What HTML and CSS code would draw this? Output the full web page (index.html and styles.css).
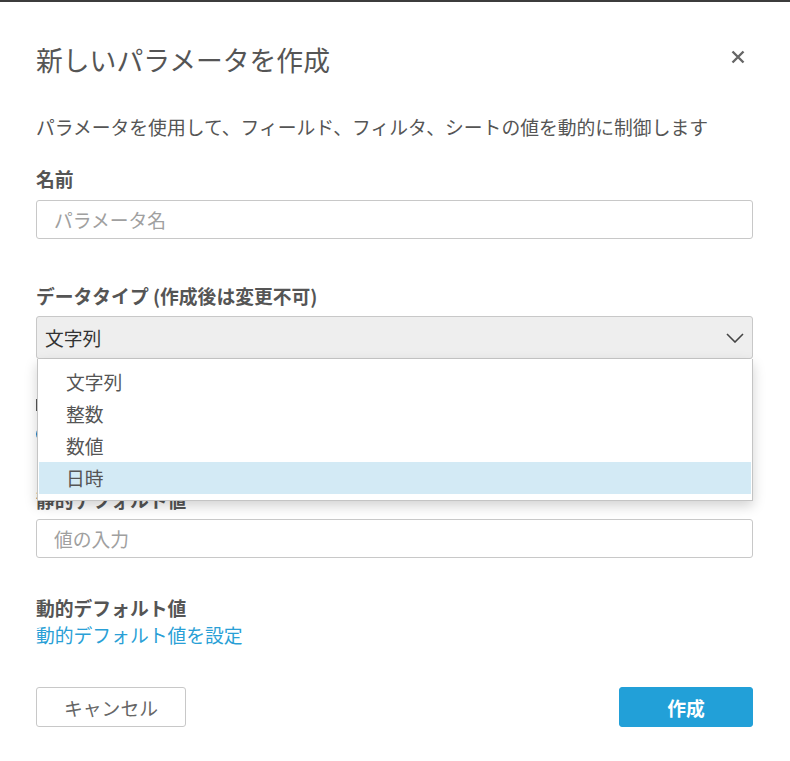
FILE: index.html
```html
<!DOCTYPE html>
<html lang="ja">
<head>
    <meta charset="UTF-8">
    <title>新しいパラメータを作成</title>
    <link rel="stylesheet" href="styles.css">
</head>
<body>

<div class="dlg">
    <div class="dlg_head">
        <h1 class="dlg_title">新しいパラメータを作成</h1>
        <span class="dlg_close">
            <svg width="14" height="14" viewBox="0 0 14 14"><path d="M1.5 1.5 L12.5 12.5 M12.5 1.5 L1.5 12.5" stroke="#666" stroke-width="2.4" fill="none"/></svg>
        </span>
    </div>

    <p class="dlg_desc">パラメータを使用して、フィールド、フィルタ、シートの値を動的に制御します</p>

    <!--名前-->
    <label class="fld_label lbl_name" for="p_name">名前</label>
    <input class="txt" type="text" id="p_name" placeholder="パラメータ名">

    <!--データタイプ-->
    <label class="fld_label lbl_type">データタイプ (作成後は変更不可)</label>
    <div class="sel_wrap">
        <div class="sel">
            <span>文字列</span>
            <svg width="18" height="10" viewBox="0 0 18 10"><path d="M1 1 L9 9 L17 1" stroke="#444" stroke-width="1.6" fill="none"/></svg>
        </div>
        <!--開いたドロップダウン-->
        <ul class="sel_menu">
            <li>文字列</li>
            <li>整数</li>
            <li>数値</li>
            <li class="on">日時</li>
        </ul>
    </div>

    <!--ドロップダウンの下に隠れている部分（端だけ見える）-->
    <div class="hidden_part">
        <span class="hid_mark"></span>
        <span class="radio radio_on"></span>
    </div>

    <label class="fld_label lbl_static" for="p_val">静的デフォルト値</label>
    <input class="txt" type="text" id="p_val" placeholder="値の入力">

    <label class="fld_label lbl_dyn">動的デフォルト値</label>
    <a class="dyn_link" href="#">動的デフォルト値を設定</a>

    <div class="dlg_foot">
        <button class="btn btn_cancel">キャンセル</button>
        <button class="btn btn_ok">作成</button>
    </div>
</div>

</body>
</html>
```

FILE: styles.css
```css
*{
    margin: 0px;
    padding: 0px;
    box-sizing: border-box;
}
body{
    background-color: white;
    border-top: 2px solid #3c3c3c;
    font-family: "Noto Sans CJK JP", "Noto Sans", sans-serif;
    color: #555;
    font-size: 18.8px;
}

.dlg{
    padding: 0 37px 0 36px;
}

.dlg_head{
    display: flex;
    justify-content: space-between;
    align-items: center;
    padding-top: 40px;
}
.dlg_title{
    font-size: 26.8px;
    font-weight: normal;
    line-height: 36px;
    color: #555;
}
.dlg_close{
    display: flex;
    margin-right: 8px;
    margin-top: -6px;
}

.dlg_desc{
    margin-top: 36px;
    line-height: 26px;
}

.fld_label{
    display: block;
    font-weight: bold;
    line-height: 26px;
    color: #555;
}
.lbl_name{
    margin-top: 26px;
    margin-bottom: 8px;
}
.lbl_type{
    margin-top: 44px;
    margin-bottom: 7px;
}
.lbl_static{
    margin-top: 42px;
    margin-bottom: 6px;
}
.lbl_dyn{
    margin-top: 36px;
    line-height: 27px;
}

.txt{
    display: block;
    width: 100%;
    height: 39px;
    border: 1px solid #c8c8c8;
    border-radius: 3px;
    padding-left: 17px;
    font-family: inherit;
    font-size: 18.8px;
    color: #333;
}
.txt::placeholder{
    color: #a0a0a0;
}

/*セレクトボックス*/
.sel_wrap{
    position: relative;
}
.sel{
    display: flex;
    justify-content: space-between;
    align-items: center;
    height: 43px;
    background-color: #eeeeee;
    border: 1px solid #c8c8c8;
    border-radius: 3px;
    padding: 0 8px 0 8px;
    color: #333;
}
.sel_menu{
    position: absolute;
    top: 43px;
    left: 1px;
    right: 0;
    list-style: none;
    background-color: white;
    border: 1px solid #c4c4c4;
    border-top: none;
    box-shadow: 0 5px 12px rgba(0,0,0,0.18);
    padding: 7px 1px 6px 1px;
    z-index: 2;
}
.sel_menu li{
    height: 32px;
    line-height: 32px;
    padding-left: 27px;
    color: #555;
}
.sel_menu li.on{
    background-color: #d3eaf5;
}

.hidden_part{
    display: flex;
    flex-direction: column;
    gap: 16px;
    padding-top: 40px;
    height: 86px;
}
.hid_mark{
    width: 12px;
    height: 12px;
    background-color: #555;
}
.radio{
    width: 14px;
    height: 14px;
    border-radius: 50%;
}
.radio_on{
    border: 4px solid #1f7fc4;
}

.dyn_link{
    display: block;
    line-height: 27px;
    color: #2a9fd6;
    text-decoration: none;
}

.dlg_foot{
    display: flex;
    justify-content: space-between;
    margin-top: 39px;
}
.btn{
    height: 40px;
    border-radius: 3px;
    font-family: inherit;
    font-size: 18.8px;
}
.btn_cancel{
    width: 150px;
    background-color: white;
    border: 1px solid #c8c8c8;
    color: #666;
}
.btn_ok{
    width: 134px;
    background-color: #22a0d8;
    border: 1px solid #22a0d8;
    color: white;
    font-weight: bold;
}
```
